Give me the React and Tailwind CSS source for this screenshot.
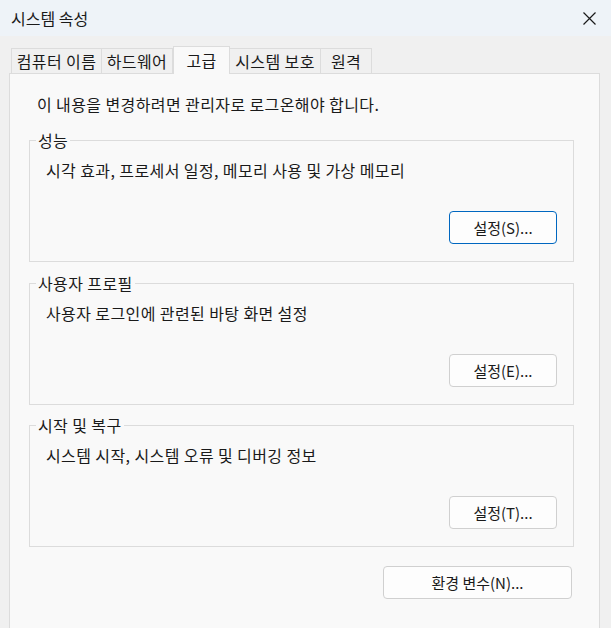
import React from 'react';

const tabs = [
  { label: '컴퓨터 이름', width: 'w-[91px]' },
  { label: '하드웨어', width: 'w-[71px]' },
  { label: '고급', width: 'w-[57px]', active: true },
  { label: '시스템 보호', width: 'w-[91px]' },
  { label: '원격', width: 'w-[51px]' },
];

const groups = [
  { title: '성능', text: '시각 효과, 프로세서 일정, 메모리 사용 및 가상 메모리', button: '설정(S)...', primary: true },
  { title: '사용자 프로필', text: '사용자 로그인에 관련된 바탕 화면 설정', button: '설정(E)...' },
  { title: '시작 및 복구', text: '시스템 시작, 시스템 오류 및 디버깅 정보', button: '설정(T)...' },
];

function DialogButton({ children, primary, className = '' }) {
  return (
    <button
      className={`h-[33px] rounded-[4px] bg-[#fdfdfd] text-[15px] leading-[20px] tracking-normal text-[#1a1a1a] border ${
        primary ? 'border-[#0067c0]' : 'border-[#d0d0d0]'
      } ${className}`}
    >
      {children}
    </button>
  );
}

function GroupBox({ title, text, button, primary, className = '' }) {
  return (
    <div className={`relative h-[122px] w-[545px] border border-[#dcdcdc] ${className}`}>
      <span className="absolute -top-[11px] left-[6px] bg-[#f9f9f9] px-[2px] leading-[20px]">{title}</span>
      <p className="pl-[16px] pt-[19px] leading-[20px]">{text}</p>
      <div className="flex justify-end pr-[16px] pt-[31px]">
        <DialogButton primary={primary} className="w-[108px]">
          {button}
        </DialogButton>
      </div>
    </div>
  );
}

export default function App() {
  return (
    <div
      className="flex h-[628px] w-[611px] flex-col overflow-hidden bg-[#f0f0f0] text-[16px] tracking-[0.4px] text-[#1a1a1a]"
      style={{ fontFamily: '"Noto Sans CJK KR", "Noto Sans", sans-serif' }}
    >
      {/* title bar */}
      <div className="flex h-9 shrink-0 items-center justify-between bg-[#eef3f8] pl-[11px] pr-[15px]">
        <span className="leading-[20px] tracking-normal">시스템 속성</span>
        <svg width="13" height="13" viewBox="0 0 13 13" className="text-[#1a1a1a]">
          <path d="M0.5 0.5 L12.5 12.5 M12.5 0.5 L0.5 12.5" stroke="currentColor" strokeWidth="1.2" />
        </svg>
      </div>

      {/* tabs */}
      <div className="mt-[10px] flex h-[27px] shrink-0 items-end pl-[11px]">
        {tabs.map((tab, i) =>
          tab.active ? (
            <div
              key={tab.label}
              className={`relative z-10 -mb-px flex h-[28px] items-center justify-center border-x border-t border-[#dcdcdc] bg-[#f9f9f9] pb-[2px] ${tab.width}`}
            >
              {tab.label}
            </div>
          ) : (
            <div
              key={tab.label}
              className={`flex h-[25px] items-center justify-center border-t border-r border-[#dcdcdc] bg-[#f0f0f0] ${
                i === 0 ? 'border-l' : ''
              } ${tabs[i - 1]?.active ? 'border-l-0' : ''} ${tab.width}`}
            >
              {tab.label}
            </div>
          )
        )}
      </div>

      {/* panel */}
      <div className="ml-[9px] h-[600px] w-[591px] shrink-0 border border-[#dcdcdc] bg-[#f9f9f9] pl-[19px]">
        <p className="pl-[8px] pt-[20px] leading-[20px]">이 내용을 변경하려면 관리자로 로그온해야 합니다.</p>

        <GroupBox {...groups[0]} className="mt-[26px]" />
        <GroupBox {...groups[1]} className="mt-[21px]" />
        <GroupBox {...groups[2]} className="mt-[20px]" />

        <div className="mt-[19px] flex w-[545px] justify-end pr-[2px]">
          <DialogButton className="w-[189px]">환경 변수(N)...</DialogButton>
        </div>
      </div>
    </div>
  );
}
